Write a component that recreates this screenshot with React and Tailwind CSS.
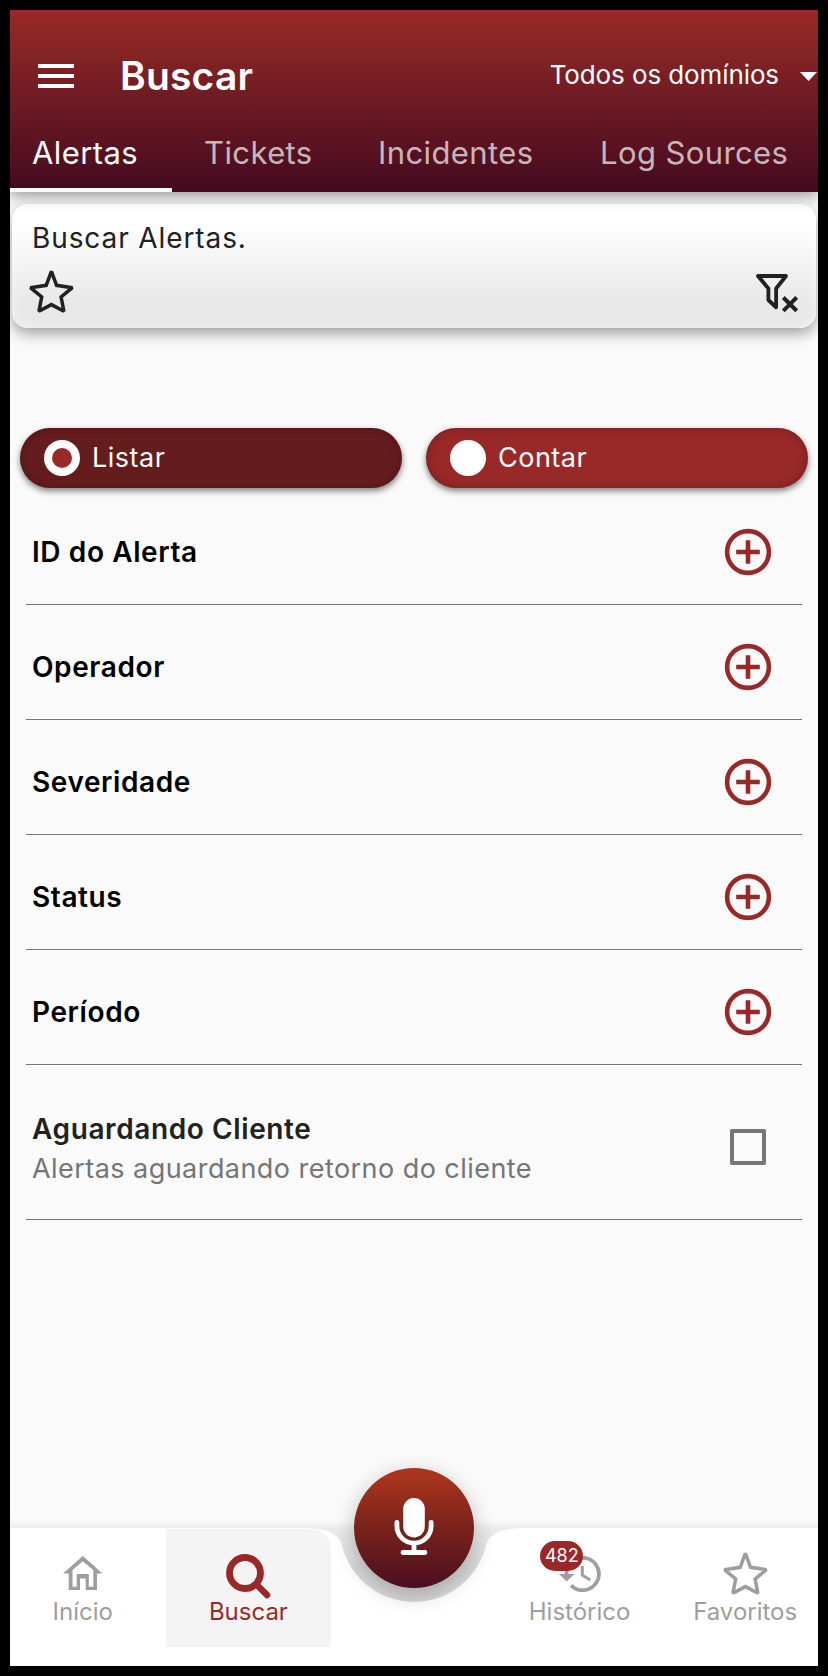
import React, { useState } from 'react'

const tabs = [
    { label: 'Alertas', pad: 'w-[162px] pl-[22px]' },
    { label: 'Tickets', pad: 'w-[174px] pl-[32px]' },
    { label: 'Incidentes', pad: 'w-[220px] pl-[32px]' },
    { label: 'Log Sources', pad: 'w-[252px] pl-[34px]' },
]

const filters = ['ID do Alerta', 'Operador', 'Severidade', 'Status', 'Período']

const StarIcon = () => (
    <svg className="block w-[45px] h-[44px]" viewBox="0 0 45 44" fill="none" stroke="currentColor" strokeWidth="3.5" strokeMiterlimit="2">
        <path d="M22.4 1.4L27.6 15.3L43.4 17.7L32.1 27L34.9 41.3L22.4 34.6L9.9 41.3L12.7 27L1.4 17.7L17.2 15.3Z" />
    </svg>
)

const FilterOffIcon = () => (
    <svg className="block w-[42px] h-[40px]" viewBox="0 0 42 40" fill="none" stroke="currentColor" strokeWidth="3.8" strokeLinejoin="round">
        <path d="M2 2H30L20.1 14.5V33.3L12.4 26V14.5Z" />
        <path d="M27.3 23.5L40.7 36.9M40.7 23.5L27.3 36.9" strokeWidth="4" />
    </svg>
)

const PlusCircleIcon = () => (
    <svg className="block w-12 h-12" viewBox="0 0 48 48" fill="none" stroke="currentColor" strokeWidth="4.6">
        <circle cx="24" cy="24" r="20.9" />
        <path d="M24 12.2V35.8M12.2 24H35.8" />
    </svg>
)

const HomeIcon = () => (
    <svg className="block w-10 h-[34px]" viewBox="0 0 40 34" fill="currentColor" fillRule="evenodd">
        <path d="M19.8 0L39.5 17.5H34V34H22.7V22.5H17V34H5.7V17.5H0ZM9.5 14V30.7H13.7V18H25.8V30.7H30.3V14L19.8 5.2Z" />
    </svg>
)

const SearchIcon = () => (
    <svg className="block w-[46px] h-[46px]" viewBox="0 0 46 46" fill="none" stroke="currentColor" strokeLinecap="round">
        <circle cx="20" cy="20" r="15.5" strokeWidth="6.8" />
        <path d="M32 32L42 42" strokeWidth="6.6" />
    </svg>
)

const HistoryIcon = () => (
    <svg className="block w-[42px] h-9" viewBox="0 0 42 36" fill="none" stroke="currentColor">
        <path d="M7.5 18.5A16.2 16.2 0 1 1 12 29.2" strokeWidth="3.8" />
        <path d="M0 18H15.4L7.7 25.6Z" fill="currentColor" stroke="none" />
        <path d="M23.3 10V19.2L31.3 24" strokeWidth="3" />
    </svg>
)

const MicIcon = () => (
    <svg className="block w-10 h-[60px]" viewBox="0 0 40 60" fill="none" stroke="white" strokeWidth="4.8" strokeLinecap="round">
        <rect x="9.2" y="0" width="21.6" height="39.4" rx="10.8" fill="white" stroke="none" />
        <path d="M2.9 24.5V28A17.1 17.1 0 0 0 37.1 28V24.5M20 46V54M9 54.5H31" />
    </svg>
)

const App = () => {
    const [activeTab, setActiveTab] = useState('Alertas')
    const [mode, setMode] = useState('Listar')
    const [waiting, setWaiting] = useState(false)

    return (
        <div className="w-[828px] h-[1676px] bg-black p-2.5 font-['Inter',sans-serif]">
            <div className="flex flex-col h-[1656px] bg-[#fafafa] overflow-hidden">

                <header className="relative z-10 shrink-0 h-[182px] pt-3.5 bg-[linear-gradient(to_bottom,#982928_0%,#852425_22%,#440a20_100%)] shadow-[0_4px_14px_rgba(0,0,0,0.4)] text-white">
                    <div className="flex items-center h-[104px] pl-7 pr-px">
                        <button className="flex flex-col gap-1.5 w-9">
                            <span className="h-1 w-full bg-white"></span>
                            <span className="h-1 w-full bg-white"></span>
                            <span className="h-1 w-full bg-white"></span>
                        </button>
                        <h1 className="ml-[46px] text-[39px] font-semibold tracking-[0.2px]">Buscar</h1>
                        <button className="ml-auto flex items-center gap-[21px] text-[26px] tracking-[-0.1px]">
                            <span className="pb-[3px]">Todos os domínios</span>
                            <svg className="w-[17px] h-[9px]" viewBox="0 0 17 9" fill="white"><path d="M0 0H17L8.5 9Z" /></svg>
                        </button>
                    </div>
                    <nav className="flex h-16">
                        {tabs.map((tab) => (
                            <button
                                key={tab.label}
                                onClick={() => setActiveTab(tab.label)}
                                className={`${tab.pad} h-16 pb-2.5 text-left text-[31px] tracking-[0.4px] whitespace-nowrap border-b-4 ${activeTab === tab.label ? 'border-white text-white' : 'border-transparent text-white/70'}`}
                            >
                                {tab.label}
                            </button>
                        ))}
                    </nav>
                </header>

                <section className="shrink-0 mt-3 mx-0.5 h-[124px] rounded-2xl bg-[linear-gradient(to_bottom,#ffffff_15%,#e8e8e8_80%)] shadow-[0_6px_14px_rgba(0,0,0,0.35),inset_0_0_12px_rgba(255,255,255,0.6)] text-[#212121]">
                    <p className="pt-3.5 pl-5 text-[28px] leading-10 tracking-[0.9px]">Buscar Alertas.</p>
                    <div className="flex justify-between pl-[17px] pr-[18px] pt-[11px]">
                        <button><StarIcon /></button>
                        <button className="pt-[5px]"><FilterOffIcon /></button>
                    </div>
                </section>

                <div className="shrink-0 flex gap-6 mt-[100px] px-2.5">
                    {['Listar', 'Contar'].map((item) => (
                        <button
                            key={item}
                            onClick={() => setMode(item)}
                            className={`flex flex-1 items-center gap-3 h-[60px] pl-6 rounded-full text-[27px] tracking-[0.5px] text-white shadow-[0_3px_6px_rgba(0,0,0,0.5),inset_0_0_10px_rgba(0,0,0,0.25)] ${mode === item ? 'bg-[#651c1d]' : 'bg-[#982928]'}`}
                        >
                            <span className="flex items-center justify-center size-9 rounded-full bg-white">
                                {mode === item && <span className="size-5 rounded-full bg-[#982928]"></span>}
                            </span>
                            {item}
                        </button>
                    ))}
                </div>

                <ul className="shrink-0 mx-4">
                    {filters.map((item, index) => (
                        <li key={item} className={`flex items-center justify-between pl-1.5 pr-[30px] border-b border-[#757575] ${index === 0 ? 'h-[117px] pt-3' : 'h-[115px] pt-2.5'}`}>
                            <span className="pb-px text-[28px] font-semibold tracking-[0.6px] text-black">{item}</span>
                            <button className="text-[#982928]"><PlusCircleIcon /></button>
                        </li>
                    ))}
                    <li className="flex items-center justify-between h-[155px] pl-1.5 pr-9 pt-2.5 border-b border-[#757575]">
                        <div className="pt-[3px]">
                            <p className="text-[28px] leading-10 font-semibold tracking-[0.6px] text-[#212121]">Aguardando Cliente</p>
                            <p className="text-[27px] leading-10 tracking-[0.45px] text-[#757575]">Alertas aguardando retorno do cliente</p>
                        </div>
                        <button onClick={() => setWaiting(!waiting)} className={`size-9 border-4 border-[#757575] rounded-[2px] ${waiting ? 'bg-[#757575]' : ''}`}></button>
                    </li>
                </ul>

                <footer className="relative mt-auto shrink-0 h-[138px]">
                    {/* bar with the notch under the mic button */}
                    <svg className="absolute left-0 -top-5 w-[808px] h-[158px]" viewBox="0 -20 808 158">
                        <defs>
                            <linearGradient id="notch" x1="0" y1="0" x2="0" y2="1">
                                <stop offset="0" stopColor="#ececec" />
                                <stop offset="0.5" stopColor="#dadada" />
                                <stop offset="1" stopColor="#d6d6d6" />
                            </linearGradient>
                            <filter id="soft" x="-5%" y="-30%" width="110%" height="160%">
                                <feGaussianBlur stdDeviation="6" />
                            </filter>
                        </defs>
                        <path d="M-20 0H828V138H-20Z" fill="#000" opacity="0.1" filter="url(#soft)" />
                        <path d="M290 0H518V80H290Z" fill="url(#notch)" />
                        <path d="M0 0H290C314 0 328 4 332 17A74 74 0 0 0 476 17C480 4 494 0 518 0H808V138H0Z" fill="#fff" />
                    </svg>
                    <div className="relative flex -mx-2.5 text-[24px] leading-8 text-[#9e9e9e]">
                        <button className="flex flex-1 flex-col items-center pt-7">
                            <HomeIcon />
                            <span className="mt-1.5">Início</span>
                        </button>
                        <button className="flex flex-1 flex-col items-center h-[118px] mt-px pt-6 rounded-tr-[20px] bg-[#f4f4f4] text-[#982928]">
                            <SearchIcon />
                            <span className="-mt-[3px]">Buscar</span>
                        </button>
                        <div className="flex-1"></div>
                        <button className="relative flex flex-1 flex-col items-center pt-7">
                            <HistoryIcon />
                            <span className="mt-1">Histórico</span>
                            <span className="absolute left-[43.5px] top-[13px] flex items-center justify-center w-[43px] h-[30px] rounded-full bg-[#982928] text-[18px] text-white">482</span>
                        </button>
                        <button className="flex flex-1 flex-col items-center pt-6">
                            <StarIcon />
                            <span>Favoritos</span>
                        </button>
                    </div>
                    <button className="absolute left-[344px] -top-[60px] flex items-center justify-center size-[120px] rounded-full bg-[linear-gradient(to_bottom,#a8341c_8%,#7e241c_45%,#4a0e20_100%)] shadow-[0_6px_22px_rgba(0,0,0,0.25)]">
                        <MicIcon />
                    </button>
                </footer>
            </div>
        </div>
    )
}

export default App
